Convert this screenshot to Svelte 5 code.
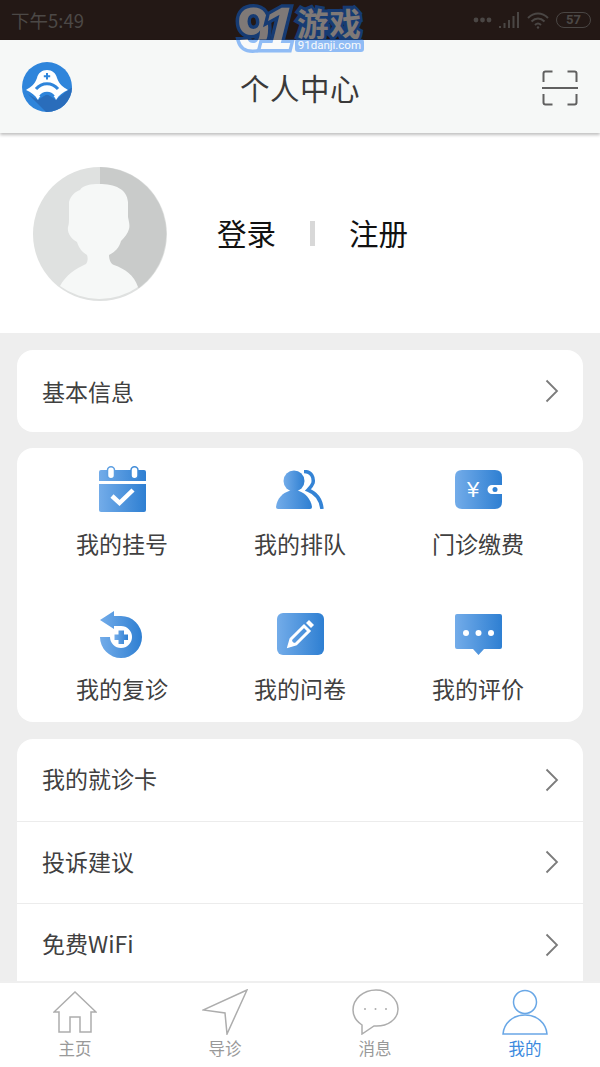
<script>
  const shortcuts = [
    { label: '我的挂号', icon: 'calendar' },
    { label: '我的排队', icon: 'people' },
    { label: '门诊缴费', icon: 'wallet' },
    { label: '我的复诊', icon: 'revisit' },
    { label: '我的问卷', icon: 'survey' },
    { label: '我的评价', icon: 'comment' }
  ];
  const rows = ['我的就诊卡', '投诉建议', '免费WiFi'];
  const tabs = [
    { label: '主页', icon: 'home' },
    { label: '导诊', icon: 'guide' },
    { label: '消息', icon: 'message' },
    { label: '我的', icon: 'me', active: true }
  ];
</script>

{#snippet chevron()}
  <svg class="chevron" width="14" height="24" viewBox="0 0 14 24">
    <path d="M1.500 1.500 L12 12 L1.500 22.500" fill="none" stroke="#7b7b7b" stroke-width="1.800" />
  </svg>
{/snippet}

<div class="page">
  <svg class="defs" width="0" height="0">
    <defs>
      <linearGradient id="blue" x1="0" y1="0" x2="1" y2="0">
        <stop offset="0" stop-color="#73ace9" />
        <stop offset="1" stop-color="#2e7fd2" />
      </linearGradient>
      <clipPath id="logo-clip">
        <circle cx="25" cy="25" r="25" />
      </clipPath>
    </defs>
  </svg>

  <div class="status">
    <span class="time">下午5:49</span>
    <div class="status-right">
      <svg width="19" height="6" viewBox="0 0 19 6">
        <circle cx="3" cy="3" r="2.400" fill="#4a4644" />
        <circle cx="9.500" cy="3" r="2.400" fill="#4a4644" />
        <circle cx="16" cy="3" r="2.400" fill="#4a4644" />
      </svg>
      <svg width="21" height="16" viewBox="0 0 21 16">
        <path d="M0 16v-2h2v2zM4.500 16v-5h2v5zM9 16V8h2v8zM13.500 16V4h2v12zM18 16V0h2v16z" fill="#4a4644" />
      </svg>
      <svg width="22" height="17" viewBox="0 0 22 17" fill="none" stroke="#4a4644" stroke-width="2">
        <path d="M1 6c6-6 14-6 20 0M4.500 9.500c4-4 9-4 13 0M8 13c2-2 4-2 6 0" />
        <circle cx="11" cy="15.500" r="1.200" fill="#4a4644" stroke="none" />
      </svg>
      <span class="battery">57</span>
    </div>
  </div>

  <header>
    <svg class="logo" width="50" height="50" viewBox="0 0 50 50">
      <circle cx="25" cy="25" r="25" fill="#2f85db" />
      <g clip-path="url(#logo-clip)">
        <path d="M6 32 L30 56 L56 56 L56 22 L46 28 L34 38 L25 32 L16 38z" fill="#2a6dbb" />
      </g>
      <path d="M4 28 C9 25 13 22 15 16 C16 11 20 8 25 8 C30 8 34 11 35 16 C37 22 41 25 46 28 C41 30 37 33 34 38 C32 33 29 32 25 32 C21 32 18 33 16 38 C13 33 9 30 4 28z" fill="#fff" />
      <path d="M25 11v6.500M21.800 14.200h6.400" stroke="#2f85db" stroke-width="2" />
      <path d="M14 27c6-7 16-7 22 0" fill="none" stroke="#2f85db" stroke-width="3" />
      <path d="M18.500 34.500c3-4.500 10-4.500 13 0" fill="none" stroke="#2f85db" stroke-width="3" />
    </svg>
    <h1>个人中心</h1>
    <svg class="scan" width="36" height="36" viewBox="0 0 36 36" fill="none" stroke="#606060" stroke-width="2">
      <path d="M1.500 12V3.500Q1.500 1.500 3.500 1.500H10.500M25.500 1.500H32.500Q34.500 1.500 34.500 3.500V12M1.500 24V32.500Q1.500 34.500 3.500 34.500H10.500M25.500 34.500H32.500Q34.500 34.500 34.500 32.500V24" />
      <path d="M0 18H36" />
    </svg>
  </header>

  <main>
    <section class="profile">
      <svg class="avatar" width="134" height="134" viewBox="0 0 134 134">
        <circle cx="67" cy="67" r="67" fill="#dfe1e0" />
        <path d="M67 0 A67 67 0 0 1 106 121 L67 100z" fill="#c9cbca" />
        <path d="M53 97 C55 94 55 91 54 88 C49 85 46 81 44 75 C38 72 34 66 35 60 C36 57 36 55 36 50 L36 35 C38 28 42 25 47 23 C50 18 58 17 66 17 C82 17 94 22 95 35 L95 50 C96 55 97 58 96 62 C95 66 92 70 88 74 C86 81 82 85 76 88 C76 93 78 97 81 98 C92 102 101 108 105 120 A67 67 0 0 1 27 119 C33 108 42 102 53 97z" fill="#f6f8f7" />
      </svg>
      <div class="auth">
        <span>登录</span>
        <i class="sep"></i>
        <span>注册</span>
      </div>
    </section>

    <div class="card row">
      <span>基本信息</span>
      {@render chevron()}
    </div>

    <div class="card grid">
      {#each shortcuts as item}
        <div class="cell">
          <div class="cell-icon">
            {#if item.icon === 'calendar'}
              <svg width="47" height="46" viewBox="0 0 47 46">
                <path d="M2 4H45Q47 4 47 6V15H0V6Q0 4 2 4z" fill="url(#blue)" />
                <rect x="8.500" y="0.800" width="7" height="12" rx="3.500" fill="#fff" stroke="#5d9fe2" stroke-width="1.500" />
                <rect x="32" y="0.800" width="7" height="12" rx="3.500" fill="#fff" stroke="#3f8bd8" stroke-width="1.500" />
                <path d="M0 18H47V44Q47 46 45 46H2Q0 46 0 44z" fill="url(#blue)" />
                <path d="M13 30L20.500 37L34 24" fill="none" stroke="#fff" stroke-width="4.500" />
              </svg>
            {:else if item.icon === 'people'}
              <svg width="48" height="39" viewBox="0 0 48 39">
                <circle cx="18" cy="11" r="10.500" fill="url(#blue)" />
                <path d="M0 37C1 28 7 23 13 21H23C29 23 35 29 36 37Q36 39 34 39H2Q0 39 0 37z" fill="url(#blue)" />
                <path d="M28 1.500C36 1.500 38 8 37 13C36 16 34 18 32 20C40 23 45 30 46 39" fill="none" stroke="#3483d5" stroke-width="3.500" />
              </svg>
            {:else if item.icon === 'wallet'}
              <svg width="47" height="39" viewBox="0 0 47 39">
                <path d="M7 0H40Q47 0 47 7V15H37A4.500 4.500 0 0 0 37 24H47V32Q47 39 40 39H7Q0 39 0 32V7Q0 0 7 0z" fill="url(#blue)" />
                <circle cx="40" cy="19.500" r="2.500" fill="#3081d3" />
                <text x="18" y="27" text-anchor="middle" class="yen">¥</text>
              </svg>
            {:else if item.icon === 'revisit'}
              <svg width="44" height="47" viewBox="0 0 44 47">
                <path d="M14 0V5H21A21 21 0 1 1 0 26H10A11 11 0 1 0 21 15H14V18L0 9z" fill="url(#blue)" />
                <path d="M14.500 23.500h4v-4h5.500v4h4v5.500h-4v4h-5.500v-4h-4z" fill="url(#blue)" />
              </svg>
            {:else if item.icon === 'survey'}
              <svg width="47" height="42" viewBox="0 0 47 42">
                <rect width="47" height="42" rx="6" fill="url(#blue)" />
                <path d="M12 33L14 26L27 13L32 18L19 31z" fill="none" stroke="#fff" stroke-width="3" />
                <path d="M11 34L13 26L19 32z" fill="#fff" />
                <path d="M29 10L32 7L37 12L34 15z" fill="#fff" />
              </svg>
            {:else}
              <svg width="47" height="41" viewBox="0 0 47 41">
                <path d="M2 0H45Q47 0 47 2V33Q47 35 45 35H29L23.500 41L18 35H2Q0 35 0 33V2Q0 0 2 0z" fill="url(#blue)" />
                <circle cx="11" cy="19" r="3" fill="#fff" />
                <circle cx="23.500" cy="19" r="3" fill="#fff" />
                <circle cx="36" cy="19" r="3" fill="#fff" />
              </svg>
            {/if}
          </div>
          <span>{item.label}</span>
        </div>
      {/each}
    </div>

    <div class="card list">
      {#each rows as label}
        <div class="row">
          <span>{label}</span>
          {@render chevron()}
        </div>
      {/each}
    </div>
  </main>

  <nav>
    {#each tabs as tab}
      <div class="tab" class:active={tab.active}>
        <div class="tab-icon">
          {#if tab.icon === 'home'}
            <svg width="44" height="42" viewBox="0 0 44 42" fill="none" stroke="#adadad" stroke-width="1.500">
              <path d="M6 41V21H1L22 1L43 21H38V41H27V26H17V41z" />
            </svg>
          {:else if tab.icon === 'guide'}
            <svg width="46" height="46" viewBox="0 0 46 46" fill="none" stroke="#adadad" stroke-width="1.500">
              <path d="M45 1L1 21L23 24L25 45z" />
            </svg>
          {:else if tab.icon === 'message'}
            <svg width="47" height="46" viewBox="0 0 47 46" fill="none" stroke="#adadad" stroke-width="1.500">
              <path d="M10 36C4 32 1 27 1 21C1 10 11 1 24 1C36 1 46 10 46 20C46 30 36 38 22 37L10 45z" />
              <g fill="#adadad" stroke="none">
                <circle cx="13" cy="20" r="1" /><circle cx="23.500" cy="20" r="1" /><circle cx="34" cy="20" r="1" />
              </g>
            </svg>
          {:else}
            <svg width="46" height="46" viewBox="0 0 46 46" fill="none" stroke="#69a7e6" stroke-width="1.500">
              <circle cx="23" cy="13" r="11.500" />
              <path d="M1 45C2 34 11 26 23 26C35 26 44 34 45 45z" />
            </svg>
          {/if}
        </div>
        <span>{tab.label}</span>
      </div>
    {/each}
  </nav>

  <div class="watermark" aria-hidden="true">
    <span class="wm-num">9<span class="wm-one">1</span></span>
    <div class="wm-side">
      <span class="wm-cn">游戏</span>
      <span class="wm-url">91danji.com</span>
    </div>
  </div>
</div>

<style>
  :global(body) {
    margin: 0;
    background: #fff;
  }

  .page {
    position: relative;
    display: flex;
    flex-direction: column;
    width: 600px;
    height: 1067px;
    overflow: hidden;
    background: #eeeeee;
    font-family: "Noto Sans CJK SC", "Noto Sans", sans-serif;
    color: #333;
  }

  .defs {
    position: absolute;
  }

  .status {
    flex: 0 0 40px;
    display: flex;
    align-items: center;
    justify-content: space-between;
    padding: 0 9px 0 11px;
    box-sizing: border-box;
    background: #231815;
    color: #4c4846;
  }

  .time {
    font-size: 18.500px;
  }

  .status-right {
    display: flex;
    align-items: center;
    gap: 7px;
  }

  .battery {
    width: 33px;
    height: 14px;
    line-height: 14px;
    border: 1.500px solid #4a4644;
    border-radius: 8px;
    text-align: center;
    font-size: 13px;
    font-weight: 700;
    font-family: "Roboto", sans-serif;
  }

  header {
    flex: 0 0 93px;
    display: grid;
    grid-template-columns: 1fr auto 1fr;
    align-items: center;
    box-sizing: border-box;
    padding: 0 22px;
    background: #f6f8f7;
    box-shadow: 0 2px 3px rgba(0, 0, 0, 0.25);
    position: relative;
    z-index: 1;
  }

  .scan {
    justify-self: end;
    margin-top: 2px;
  }

  h1 {
    margin: 0;
    font-size: 29.500px;
    font-weight: 400;
    letter-spacing: 0.500px;
    color: #3a3a3a;
  }

  main {
    flex: 1;
    min-height: 0;
    overflow: hidden;
  }

  .profile {
    display: flex;
    align-items: center;
    height: 200px;
    box-sizing: border-box;
    padding: 1px 0 0 33px;
    background: #fff;
  }

  .avatar {
    flex: none;
  }

  .auth {
    display: flex;
    align-items: center;
    margin: -3px 0 0 50px;
    font-size: 29.500px;
    color: #111;
  }

  .sep {
    width: 5px;
    height: 25px;
    margin: 3px 34px 0;
    background: #d8d8d8;
  }

  .card {
    margin: 17px 17px 0;
    background: #fff;
    border-radius: 16px;
  }

  .row {
    display: flex;
    align-items: center;
    justify-content: space-between;
    height: 82px;
    padding: 0 24px 0 25px;
    font-size: 23px;
    color: #404040;
  }

  .row span {
    margin-bottom: 1px;
  }

  .grid {
    display: grid;
    grid-template-columns: repeat(3, 178px);
    justify-content: center;
    height: 274px;
    padding-top: 14px;
    box-sizing: border-box;
    grid-auto-rows: 145px;
    margin-top: 16px;
  }

  .cell {
    display: flex;
    flex-direction: column;
    align-items: center;
    font-size: 23px;
    line-height: 34px;
    color: #404040;
  }

  .cell-icon {
    display: flex;
    align-items: center;
    justify-content: center;
    height: 54px;
    margin-bottom: 10px;
  }

  .cell-icon svg {
    display: block;
  }

  .yen {
    font-size: 22px;
    fill: #fff;
    font-family: "Liberation Sans", sans-serif;
  }

  .list {
    padding-bottom: 40px;
  }

  .list .row {
    height: 81.500px;
    border-bottom: 1px solid #ececec;
  }

  .list .row span {
    margin-bottom: 3px;
  }

  .list .row:last-child {
    border-bottom: 0;
  }

  nav {
    flex: 0 0 86px;
    display: grid;
    grid-template-columns: repeat(4, 150px);
    box-sizing: border-box;
    padding-top: 6px;
    border-top: 2px solid #efefef;
    background: #fff;
    position: relative;
  }

  .tab {
    display: flex;
    flex-direction: column;
    align-items: center;
    font-size: 16.500px;
    line-height: 24px;
    color: #999;
  }

  .tab.active {
    color: #3c8ade;
  }

  .tab-icon {
    display: flex;
    align-items: center;
    justify-content: center;
    height: 46px;
    margin-bottom: 1px;
  }

  .watermark {
    position: absolute;
    left: 237px;
    top: 0;
    display: flex;
    opacity: 0.42;
    pointer-events: none;
    z-index: 2;
  }

  .wm-num {
    font-family: "Liberation Sans", sans-serif;
    font-size: 60px;
    font-weight: 700;
    line-height: 58px;
    letter-spacing: -8px;
    color: #fff;
    -webkit-text-stroke: 7px #056cf4;
    paint-order: stroke fill;
  }

  .wm-one {
    display: inline-block;
    transform: skewX(-14deg);
  }

  .wm-side {
    display: flex;
    flex-direction: column;
    align-items: center;
    margin-left: 7px;
    padding-top: 3px;
  }

  .wm-cn {
    font-size: 31.500px;
    font-weight: 700;
    line-height: 38px;
    letter-spacing: 1px;
    color: #fff;
    -webkit-text-stroke: 6px #056cf4;
    paint-order: stroke fill;
  }

  .wm-url {
    padding: 0 3px;
    margin-top: -2px;
    font-family: "Roboto", sans-serif;
    font-size: 11.500px;
    line-height: 13px;
    color: #fff;
    background: #056cf4;
    border-radius: 3px;
  }
</style>
